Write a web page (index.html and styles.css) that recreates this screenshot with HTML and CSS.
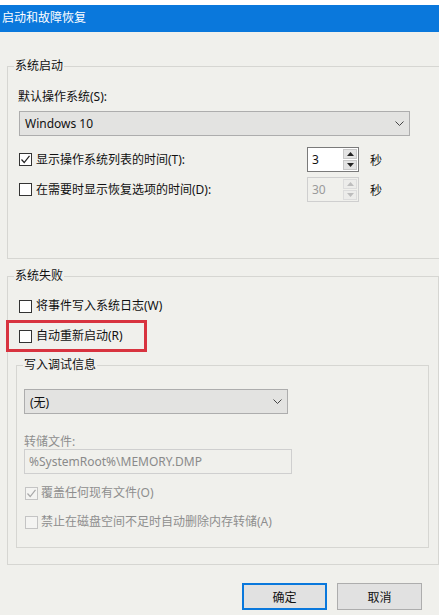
FILE: index.html
```html
<!DOCTYPE html>
<html lang="zh-CN">
<head>
<meta charset="utf-8">
<title>启动和故障恢复</title>
<link rel="stylesheet" href="styles.css">
</head>
<body>
<div class="titlebar">启动和故障恢复</div>
<div class="client">
  <div class="group g1">
    <div class="legend">系统启动</div>
    <div class="os-label">默认操作系统(S):</div>
    <div class="combo os-combo">
      <span>Windows 10</span>
      <svg class="chev" width="9" height="5" viewBox="0 0 9 5"><polyline points="0.5,0.5 4.5,4.5 8.5,0.5" fill="none" stroke="#444" stroke-width="1"/></svg>
    </div>
    <div class="timerow r1">
      <div class="check wide">
        <span class="box"><svg width="11" height="11" viewBox="0 0 11 11"><polyline points="1.5,5.5 4.2,8.5 9.5,1.8" fill="none" stroke="#222" stroke-width="1.2"/></svg></span>
        <span>显示操作系统列表的时间(T):</span>
      </div>
      <div class="spin">
        <span class="val">3</span>
        <span class="arrows">
          <span class="arr"><svg width="7" height="4" viewBox="0 0 7 4"><polygon points="0,4 3.5,0 7,4" fill="#222"/></svg></span>
          <span class="arr"><svg width="7" height="4" viewBox="0 0 7 4"><polygon points="0,0 3.5,4 7,0" fill="#222"/></svg></span>
        </span>
      </div>
      <span class="unit">秒</span>
    </div>
    <div class="timerow r2">
      <div class="check wide">
        <span class="box"></span>
        <span>在需要时显示恢复选项的时间(D):</span>
      </div>
      <div class="spin disabled">
        <span class="val">30</span>
        <span class="arrows">
          <span class="arr"><svg width="7" height="4" viewBox="0 0 7 4"><polygon points="0,4 3.5,0 7,4" fill="#bdbdbd"/></svg></span>
          <span class="arr"><svg width="7" height="4" viewBox="0 0 7 4"><polygon points="0,0 3.5,4 7,0" fill="#bdbdbd"/></svg></span>
        </span>
      </div>
      <span class="unit">秒</span>
    </div>
  </div>

  <div class="group g2">
    <div class="legend">系统失败</div>
    <div class="check row-w">
      <span class="box"></span>
      <span>将事件写入系统日志(W)</span>
    </div>
    <div class="highlight">
      <div class="check">
        <span class="box"></span>
        <span>自动重新启动(R)</span>
      </div>
    </div>
    <div class="group inner">
      <div class="legend">写入调试信息</div>
      <div class="combo debug-combo">
        <span>(无)</span>
        <svg class="chev" width="9" height="5" viewBox="0 0 9 5"><polyline points="0.5,0.5 4.5,4.5 8.5,0.5" fill="none" stroke="#444" stroke-width="1"/></svg>
      </div>
      <div class="dump-label">转储文件:</div>
      <div class="textbox">%SystemRoot%\MEMORY.DMP</div>
      <div class="check disabled row-o">
        <span class="box"><svg width="11" height="11" viewBox="0 0 11 11"><polyline points="1.5,5.5 4.2,8.5 9.5,1.8" fill="none" stroke="#a8a8a8" stroke-width="1.2"/></svg></span>
        <span>覆盖任何现有文件(O)</span>
      </div>
      <div class="check disabled row-a">
        <span class="box"></span>
        <span>禁止在磁盘空间不足时自动删除内存转储(A)</span>
      </div>
    </div>
  </div>

  <div class="buttons">
    <button class="btn primary">确定</button>
    <button class="btn">取消</button>
  </div>
</div>
</body>
</html>
```

FILE: styles.css
```css
html, body {
  margin: 0;
  padding: 0;
}
body {
  width: 439px;
  height: 615px;
  overflow: hidden;
  background: #ffffff;
  font-family: "Noto Sans", "Noto Sans CJK SC", sans-serif;
  font-size: 12px;
  color: #111;
}
.titlebar {
  margin-top: 5px;
  height: 27px;
  line-height: 25px;
  padding-left: 2px;
  background: #0a78dc;
  color: #fff;
}
.client {
  height: 583px;
  box-sizing: border-box;
  padding: 34px 0 0 7px;
  background: #f0f0ec;
  overflow: hidden;
}
.group {
  border: 1px solid #d6d6d2;
}
.g1 {
  border-right: none;
  padding-bottom: 56px;
}
.g2 {
  margin-top: 17px;
  padding-bottom: 16px;
}
.legend {
  display: block;
  width: max-content;
  margin: -9px 0 0 6px;
  padding: 0 1px;
  line-height: 16px;
  background: #f0f0ec;
}
.os-label {
  margin: 15px 0 0 10px;
  line-height: 16px;
}
.combo {
  display: flex;
  align-items: center;
  justify-content: space-between;
  box-sizing: border-box;
  height: 25px;
  padding: 0 5px 0 5px;
  background: #e3e3e1;
  border: 1px solid #adadad;
}
.os-combo {
  margin: 6px 0 0 11px;
  width: 391px;
}
.timerow {
  display: flex;
  align-items: center;
  height: 25px;
  margin-left: 11px;
}
.r1 { margin-top: 11px; }
.r2 { margin-top: 5px; }
.check {
  display: flex;
  align-items: center;
  line-height: 16px;
  height: 16px;
}
.check.wide {
  width: 288px;
}
.box {
  display: flex;
  align-items: center;
  justify-content: center;
  width: 13px;
  height: 13px;
  box-sizing: border-box;
  border: 1px solid #333;
  background: #fff;
  margin-right: 4px;
  flex: none;
}
.check.disabled {
  color: #8e8e8e;
}
.check.disabled .box {
  border-color: #c4c4c4;
  background: #f4f4f2;
  margin-right: 3px;
}
.spin {
  display: flex;
  width: 52px;
  height: 25px;
  box-sizing: border-box;
  border: 1px solid #7a7a7a;
  background: #fff;
}
.spin .val {
  flex: 1;
  padding-left: 4px;
  line-height: 23px;
}
.arrows {
  display: flex;
  flex-direction: column;
  width: 16px;
  padding: 1px;
  box-sizing: border-box;
  gap: 1px;
}
.arr {
  flex: 1;
  display: flex;
  align-items: center;
  justify-content: center;
  background: #e3e3e3;
  border: 1px solid #c8c8c8;
}
.spin.disabled {
  border-color: #cfcfcf;
  background: #f0f0ec;
  color: #9a9a9a;
}
.spin.disabled .arr {
  background: #ececea;
  border-color: #dcdcdc;
}
.unit {
  margin-left: 11px;
}
.row-w {
  margin: 14px 0 0 11px;
}
.highlight {
  display: flex;
  align-items: center;
  box-sizing: border-box;
  width: 141px;
  height: 32px;
  margin: 6px 0 0 -2px;
  padding-left: 10px;
  border: 3px solid #d8333f;
}
.inner {
  margin: 13px 0 0 8px;
  width: 413px;
  box-sizing: border-box;
  padding-bottom: 17px;
}
.debug-combo {
  margin: 16px 0 0 7px;
  width: 264px;
}
.dump-label {
  margin: 21px 0 0 7px;
  line-height: 14px;
  color: #8e8e8e;
}
.textbox {
  margin-left: 7px;
  width: 268px;
  height: 25px;
  box-sizing: border-box;
  border: 1px solid #cfcfcf;
  padding-left: 4px;
  line-height: 23px;
  color: #8a8a8a;
  background: #f0f0ec;
}
.row-o {
  margin: 11px 0 0 8px;
}
.row-a {
  margin: 13px 0 0 8px;
}
.buttons {
  display: flex;
  justify-content: flex-end;
  gap: 10px;
  padding-right: 17px;
  margin-top: 18px;
}
.btn {
  width: 85px;
  height: 27px;
  box-sizing: border-box;
  background: #e1e1e1;
  border: 1px solid #adadad;
  font: inherit;
  color: #111;
  padding: 0;
}
.btn.primary {
  border: 2px solid #0a78dc;
}
```
